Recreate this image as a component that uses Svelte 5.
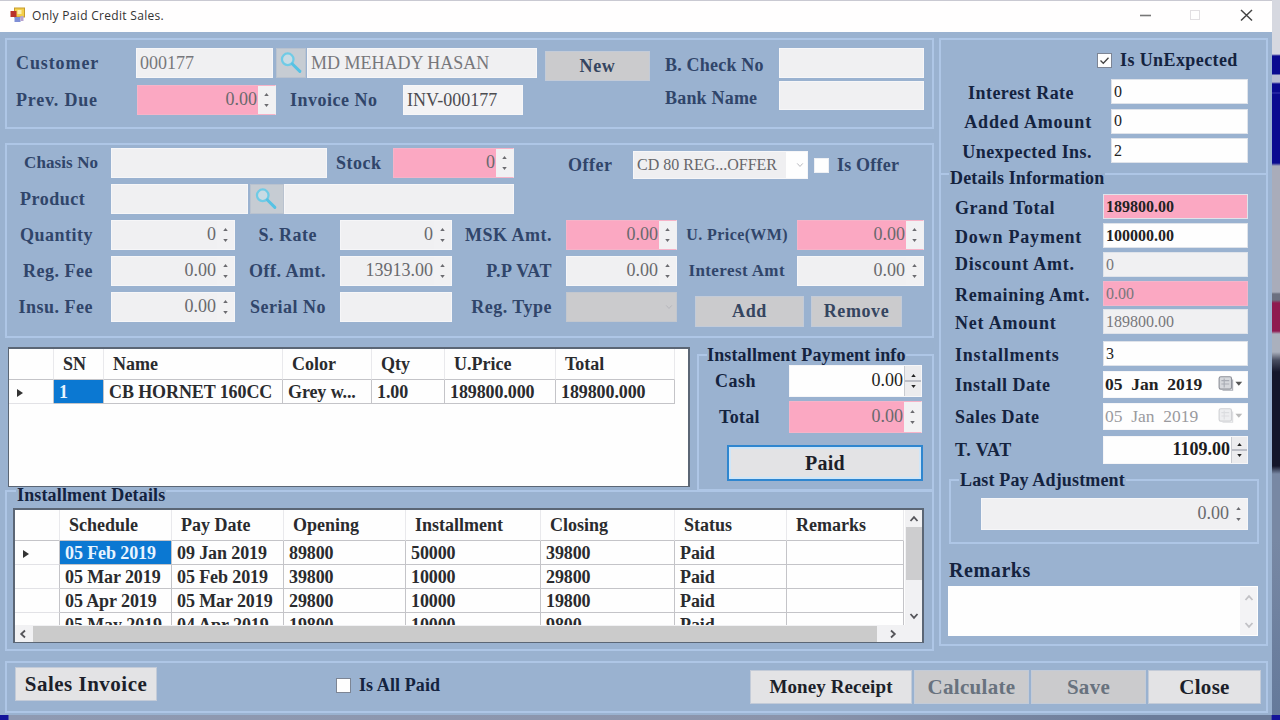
<script>
  let customerId = $state('000177');
  let customerName = $state('MD MEHADY HASAN');
  let invoiceNo = $state('INV-000177');
  let unexpected = $state(true);
  let allPaid = $state(false);
  let isOffer = $state(false);

  const items = [
    { sn: '1', name: 'CB HORNET 160CC', color: 'Grey w...', qty: '1.00', price: '189800.000', total: '189800.000' }
  ];

  const installments = [
    ['05 Feb 2019', '09 Jan 2019', '89800', '50000', '39800', 'Paid', ''],
    ['05 Mar 2019', '05 Feb 2019', '39800', '10000', '29800', 'Paid', ''],
    ['05 Apr 2019', '05 Mar 2019', '29800', '10000', '19800', 'Paid', ''],
    ['05 May 2019', '04 Apr 2019', '19800', '10000', '9800', 'Paid', '']
  ];
</script>

{#snippet num(value, kind = '')}
  <div class="num {kind}">
    <span class="value">{value}</span>
    <span class="spin">
      <svg viewBox="0 0 6 4"><path d="M0 4 3 0 6 4z" /></svg>
      <svg viewBox="0 0 6 4"><path d="M0 0 3 4 6 0z" /></svg>
    </span>
  </div>
{/snippet}

{#snippet lookup()}
  <button class="lookup" aria-label="Search">
    <svg viewBox="0 0 30 30">
      <circle cx="11.500" cy="11" r="6.2" fill="#c9dbe4" stroke="#6fcbe6" stroke-width="2.4" />
      <path d="M16.5 16 24.500 24" stroke="#56c2e4" stroke-width="3.2" stroke-linecap="round" />
    </svg>
  </button>
{/snippet}

{#snippet chevron(dir)}
  <svg class="chevron {dir}" viewBox="0 0 10 10"><path d="M1.5 7 5 3.2 8.5 7" /></svg>
{/snippet}

{#snippet date(value, kind = '')}
  <div class="date {kind}">
    <span>{value}</span>
    <svg viewBox="0 0 24 16">
      <rect x="1" y="1.5" width="11" height="11" rx="1.5" fill="#d6d8dc" stroke="#8d9098" />
      <path d="M3 5h7M3 8h7M5.5 3v8M13 4v9.500H4" fill="none" stroke="#a9acb4" />
      <path d="M15.500 6h6l-3 3.500z" fill="#555" />
    </svg>
  </div>
{/snippet}

<div class="desktop">
  <div class="window">
    <header class="titlebar">
      <svg class="app-icon" viewBox="0 0 16 16">
        <rect x="5" y="1" width="10" height="9" fill="#f3cf4b" stroke="#c79b2a" />
        <rect x="1" y="4" width="6" height="6" fill="#b8322c" />
        <rect x="5" y="10" width="6" height="5" fill="#7f8fd6" />
        <rect x="11" y="9" width="3" height="5" fill="#b7a3cf" />
        <rect x="8" y="3" width="4" height="4" fill="#fbeeb0" />
      </svg>
      <span class="title">Only Paid Credit Sales.</span>
      <svg class="controls" viewBox="0 0 120 16">
        <path d="M4 8.500h11" stroke="#777" stroke-width="1.6" />
        <rect x="54.500" y="3.500" width="9" height="9" fill="none" stroke="#e2dfe2" />
        <path d="M105 3 116 13.500M116 3 105 13.500" stroke="#444" stroke-width="1.500" />
      </svg>
    </header>

    <main>
      <div class="left">
        <section class="panel customer">
          <div>
            <div class="row row-customer">
              <label for="cust">Customer</label>
              <input id="cust" disabled bind:value={customerId} />
              {@render lookup()}
              <input disabled bind:value={customerName} />
              <button class="btn off">New</button>
            </div>
            <div class="row row-invoice">
              <label for="due">Prev. Due</label>
              {@render num('0.00', 'pink')}
              <label for="inv">Invoice No</label>
              <input id="inv" class="mid" bind:value={invoiceNo} />
            </div>
          </div>
          <div class="bank">
            <label for="check">B. Check No</label>
            <input id="check" disabled />
            <label for="bank">Bank Name</label>
            <input id="bank" disabled />
          </div>
        </section>

        <section class="panel product">
          <div class="row row-chasis">
            <label for="chasis">Chasis No</label>
            <input id="chasis" disabled />
            <label for="stock">Stock</label>
            {@render num('0', 'pink')}
            <label for="offer">Offer</label>
            <div class="combo">
              <span>CD 80 REG...OFFER</span>
              {@render chevron('down')}
            </div>
            <label class="check"><input type="checkbox" bind:checked={isOffer} />Is Offer</label>
          </div>
          <div class="row row-product">
            <label for="prod">Product</label>
            <input id="prod" disabled />
            {@render lookup()}
            <input disabled />
          </div>
          <div class="row row-four">
            <span class="label">Quantity</span>
            {@render num('0')}
            <span class="label rate">S. Rate</span>
            {@render num('0')}
            <span class="label">MSK Amt.</span>
            {@render num('0.00', 'pink')}
            <span class="label small">U. Price(WM)</span>
            {@render num('0.00', 'pink')}
          </div>
          <div class="row row-four">
            <span class="label">Reg. Fee</span>
            {@render num('0.00')}
            <span class="label">Off. Amt.</span>
            {@render num('13913.00')}
            <span class="label">P.P VAT</span>
            {@render num('0.00')}
            <span class="label medium">Interest Amt</span>
            {@render num('0.00')}
          </div>
          <div class="row row-four last">
            <span class="label">Insu. Fee</span>
            {@render num('0.00')}
            <span class="label">Serial No</span>
            <input disabled />
            <span class="label">Reg. Type</span>
            <div class="combo gray">{@render chevron('down')}</div>
            <div class="actions">
              <button class="btn off">Add</button>
              <button class="btn off">Remove</button>
            </div>
          </div>
        </section>

        <div class="middle">
          <div class="grid items">
            <table>
              <colgroup>
                <col class="c45" /><col class="c50" /><col class="c179" /><col class="c89" />
                <col class="c73" /><col class="c111" /><col class="c120" />
              </colgroup>
              <thead>
                <tr><th></th><th>SN</th><th>Name</th><th>Color</th><th>Qty</th><th>U.Price</th><th>Total</th></tr>
              </thead>
              <tbody>
                {#each items as item}
                  <tr>
                    <td class="marker"><svg viewBox="0 0 6 8"><path d="M0 0 6 4 0 8z" /></svg></td>
                    <td class="selected">{item.sn}</td>
                    <td>{item.name}</td>
                    <td>{item.color}</td>
                    <td>{item.qty}</td>
                    <td>{item.price}</td>
                    <td>{item.total}</td>
                  </tr>
                {/each}
              </tbody>
            </table>
          </div>

          <fieldset class="payment">
            <legend>Installment Payment info</legend>
            <div class="pay-row">
              <span class="label">Cash</span>
              {@render num('0.00', 'active')}
            </div>
            <div class="pay-row total">
              <span class="label">Total</span>
              {@render num('0.00', 'pink')}
            </div>
            <button class="btn paid">Paid</button>
          </fieldset>
        </div>

        <fieldset class="schedule">
          <legend>Installment Details</legend>
          <div class="grid plan">
            <div class="viewport">
              <table>
                <colgroup>
                  <col class="c45" /><col class="c112" /><col class="c112" /><col class="c122" />
                  <col class="c135" /><col class="c134" /><col class="c112" /><col class="c117" />
                </colgroup>
                <thead>
                  <tr>
                    <th></th><th>Schedule</th><th>Pay Date</th><th>Opening</th>
                    <th>Installment</th><th>Closing</th><th>Status</th><th>Remarks</th>
                  </tr>
                </thead>
                <tbody>
                  {#each installments as line, i}
                    <tr>
                      <td class="marker">
                        {#if i === 0}<svg viewBox="0 0 6 8"><path d="M0 0 6 4 0 8z" /></svg>{/if}
                      </td>
                      {#each line as cell, j}
                        <td class:selected={i === 0 && j === 0}>{cell}</td>
                      {/each}
                    </tr>
                  {/each}
                </tbody>
              </table>
            </div>
            <div class="vscroll">
              {@render chevron('up')}
              <div class="thumb"></div>
              {@render chevron('down')}
            </div>
            <div class="hscroll">
              {@render chevron('left')}
              <div class="thumb"></div>
              {@render chevron('right')}
            </div>
          </div>
        </fieldset>
      </div>

      <aside>
        <section class="panel interest">
          <label class="check"><input type="checkbox" bind:checked={unexpected} />Is UnExpected</label>
          <div class="pairs">
            <label class="rate" for="rate">Interest Rate</label>
            <input id="rate" value="0" />
            <label class="added" for="added">Added Amount</label>
            <input id="added" value="0" />
            <label for="ins">Unexpected Ins.</label>
            <input id="ins" value="2" />
          </div>
        </section>

        <fieldset class="details">
          <legend>Details Information</legend>
          <div class="totals">
            <label for="grand">Grand Total</label>
            <input id="grand" class="pink strong" value="189800.00" />
            <label for="down">Down Payment</label>
            <input id="down" class="strong" value="100000.00" />
            <label for="disc">Discount Amt.</label>
            <input id="disc" disabled value="0" />
            <label for="rem">Remaining Amt.</label>
            <input id="rem" class="pink" disabled value="0.00" />
            <label for="net">Net Amount</label>
            <input id="net" disabled value="189800.00" />
            <label for="count">Installments</label>
            <input id="count" value="3" />
            <span class="label">Install Date</span>
            {@render date('05  Jan  2019')}
            <span class="label">Sales Date</span>
            {@render date('05  Jan  2019', 'dim')}
            <span class="label">T. VAT</span>
            {@render num('1109.00', 'active heavy')}
          </div>

          <fieldset class="adjust">
            <legend>Last Pay Adjustment</legend>
            {@render num('0.00')}
          </fieldset>

          <span class="remarks-title">Remarks</span>
          <div class="memo">
            <div class="memo-scroll">
              {@render chevron('up')}
              {@render chevron('down')}
            </div>
          </div>
        </fieldset>
      </aside>
    </main>

    <footer class="panel bottom">
      <button class="btn invoice">Sales Invoice</button>
      <label class="check"><input type="checkbox" bind:checked={allPaid} />Is All Paid</label>
      <div class="commands">
        <button class="btn receipt">Money Receipt</button>
        <button class="btn dim">Calculate</button>
        <button class="btn dim">Save</button>
        <button class="btn">Close</button>
      </div>
    </footer>
  </div>
</div>

<style>
  :global(body) {
    margin: 0;
    overflow: hidden;
  }

  .desktop,
  .desktop :global(*) {
    box-sizing: border-box;
  }

  .desktop {
    width: 1280px;
    height: 720px;
    padding: 0 8px 5px 0;
    overflow: hidden;
    background:
      linear-gradient(90deg, #14149a 8px, #8f9ab2 9px, #8b94ab 62%, #6b7c9a 90%, #6b7c9a 99.300%, #14149a 99.400%) 0 100% / 100% 5px no-repeat,
      linear-gradient(
        180deg,
        #d6d8e0 0 54px, #0a0a90 56px 74px, #b9bdd2 75px 82px, #0a0a90 84px 92px, #3a3ab0 93px,
        #0a0a90 94px 163px, #a9acba 166px 292px, #6c7080 294px 300px, #8f1a50 303px 331px,
        #aab0bd 334px 352px, #4a4f62 360px, #14162a 372px 466px, #7888a4 474px 540px, #64799a 100%
      );
    font-family: 'Liberation Serif', serif;
    font-size: 18px;
    color: #14233f;
  }

  .window {
    width: 1272px;
    height: 715px;
    background: #9ab2d0;
    border-top: 1px solid #c9c9d2;
  }

  .titlebar {
    height: 31px;
    display: flex;
    align-items: center;
    padding: 0 16px 3px 9px;
    background: #fffefe;
  }

  .app-icon {
    width: 17px;
    height: 16px;
  }

  .title {
    flex: 1;
    margin-left: 6px;
    font: 12px 'Open Sans', sans-serif;
    letter-spacing: 0.3px;
    color: #333;
  }

  .controls {
    width: 120px;
    height: 16px;
  }

  main {
    display: flex;
    gap: 5px;
    height: 629px;
    padding: 6px 4px 0 5px;
  }

  .left {
    width: 929px;
  }

  aside {
    width: 329px;
  }

  .panel,
  fieldset {
    margin: 0;
    padding: 0;
    min-width: 0;
    border: 2px solid #aec6e6;
  }

  legend {
    height: 20px;
    line-height: 20px;
    padding: 0 1px;
    font-weight: bold;
    letter-spacing: 0.15px;
    white-space: nowrap;
  }

  label,
  .label {
    font-weight: bold;
    letter-spacing: 0.5px;
    white-space: nowrap;
  }

  input:not([type]),
  .num,
  .date,
  .combo {
    min-width: 0;
    width: 100%;
    height: 30px;
    padding: 0 3px;
    border: 1px solid #f6f6f8;
    border-radius: 0;
    background: #fefefe;
    color: #222;
    font: 18px 'Liberation Serif', serif;
    outline: none;
  }

  input:not([type]):disabled {
    background: #f0f0f2;
    color: #77777b;
  }

  input.mid {
    background: #f3f3f5;
    color: #4c4c50;
  }

  input.pink:not([type]),
  input.pink:not([type]):disabled {
    background: #fba8c2;
    border-color: #f4b5ca;
  }

  input.strong:not([type]) {
    font-weight: bold;
  }

  /* Numeric up-down */
  .num {
    display: flex;
    padding: 0;
    background: #f0f0f2;
    color: #69696d;
  }

  .num .value {
    flex: 1;
    display: flex;
    align-items: center;
    justify-content: flex-end;
    padding: 0 1px 1px 0;
  }

  .num.pink .value {
    background: #fba8c2;
  }

  .num.pink {
    border-color: #f6b3c8;
    border-right-color: #f0f0f2;
  }

  .num.active {
    background: #fefefe;
    color: #1d1d20;
  }

  .num.heavy {
    font-weight: bold;
  }

  .spin {
    width: 17px;
    display: flex;
    flex-direction: column;
    align-items: center;
    justify-content: center;
    gap: 8px;
    background: #f1f1f3;
  }

  .spin svg {
    width: 5px;
    height: 3px;
    fill: #6b6b70;
  }

  .active .spin {
    border-left: 1px solid #c9cbd0;
    background: linear-gradient(#ececee 0 48%, #bcbec6 48% 53%, #ececee 53%);
  }

  .active .spin svg {
    fill: #222;
  }

  .btn {
    padding: 0;
    border: 1px solid #c3cbd8;
    background: #e3e3e5;
    color: #1c1f2a;
    font: bold 21px 'Liberation Serif', serif;
    letter-spacing: 0.3px;
    white-space: nowrap;
  }

  .btn.off {
    background: #cbcbcd;
    color: #354560;
    font-size: 18px;
    letter-spacing: 0.6px;
  }

  .btn.dim {
    background: #cbcbcd;
    color: #68727e;
  }

  .lookup {
    width: 30px;
    height: 30px;
    padding: 0;
    border: 1px solid #b9c2cf;
    background: #c6ccd3;
  }

  .lookup svg {
    display: block;
    width: 28px;
    height: 28px;
  }

  .check {
    display: flex;
    align-items: center;
    gap: 8px;
  }

  input[type='checkbox'] {
    appearance: none;
    width: 15px;
    height: 15px;
    margin: 0;
    border: 1px solid #7d8594;
    background: #fefefe;
  }

  input[type='checkbox']:checked {
    background: #fefefe url("data:image/svg+xml,%3Csvg xmlns='http://www.w3.org/2000/svg' viewBox='0 0 13 13'%3E%3Cpath d='M2.500 6.500 5.300 9.300 10.500 3.800' fill='none' stroke='%23444' stroke-width='1.300'/%3E%3C/svg%3E");
  }

  .chevron {
    width: 10px;
    height: 10px;
    fill: none;
    stroke: #55555a;
    stroke-width: 1.8;
  }

  .chevron.down {
    transform: rotate(180deg);
  }

  .chevron.left {
    transform: rotate(-90deg);
  }

  .chevron.right {
    transform: rotate(90deg);
  }

  .combo {
    display: flex;
    align-items: center;
    justify-content: space-between;
    height: 28px;
    font-size: 16px;
    color: #66666a;
    background: linear-gradient(90deg, #efeff1 152px, #fefefe 152px);
  }

  .combo.gray {
    height: 30px;
    justify-content: flex-end;
    background: #cbcbcd;
    border-color: #c3c7ce;
  }

  .combo .chevron {
    width: 8px;
    stroke: #b5b5ba;
    stroke-width: 1.2;
  }

  .row {
    display: grid;
    grid-template-rows: 30px;
    align-items: center;
    height: 30px;
  }

  .row label,
  .row .label,
  .bank label {
    color: #30456a;
  }

  /* Customer */
  .customer {
    display: flex;
    height: 91px;
    margin-bottom: 14px;
    padding-top: 8px;
  }

  .customer label {
    padding-left: 14px;
  }

  .row-customer {
    grid-template-columns: 129px 137px 34px 230px 113px;
    margin-bottom: 7px;
  }

  .row-customer label {
    padding-left: 9px;
    letter-spacing: 0.9px;
  }

  .row-customer .lookup {
    margin-left: 3px;
  }

  .row-customer .btn {
    align-self: start;
    height: 30px;
    margin: 3px 0 0 8px;
  }

  .row-invoice {
    grid-template-columns: 130px 139px 127px 120px;
  }

  .row-invoice label:first-child {
    padding-left: 9px;
    letter-spacing: 0.8px;
  }

  .bank {
    display: grid;
    grid-template-columns: 129px 145px;
    grid-template-rows: 30px 29px;
    row-gap: 3px;
    align-items: center;
    height: 62px;
  }

  .bank label {
    padding: 5px 0 0 15px;
    letter-spacing: 0.2px;
  }

  .bank input:not([type]) {
    height: 100%;
  }

  /* Product */
  .product {
    height: 195px;
    padding-top: 3px;
  }

  .row-chasis {
    grid-template-columns: 104px 216px 66px 121px 119px 175px 110px;
  }

  .row-chasis label {
    padding-left: 9px;
  }

  .row-chasis label:first-child {
    padding-left: 17px;
    font-size: 17px;
    letter-spacing: 0.1px;
  }

  .row-chasis label[for='offer'] {
    padding: 4px 0 0 54px;
  }

  .row-chasis .combo {
    margin-top: 4px;
  }

  .row-chasis .check {
    padding: 5px 0 0 6px;
    letter-spacing: 0.2px;
  }

  .row-chasis input[type='checkbox'] {
    border-color: #eef0f4;
  }

  .row-product {
    grid-template-columns: 104px 137px 36px 230px;
    margin-top: 6px;
  }

  .row-product label {
    padding-left: 13px;
  }

  .row-product .lookup {
    width: 34px;
    margin-left: 2px;
  }

  .row-product .lookup svg {
    width: 30px;
  }

  .row-four {
    grid-template-columns: 104px 124px 105px 112px 114px 111px 120px 127px;
    margin-top: 6px;
  }

  .row-four .label {
    padding-right: 14px;
    text-align: right;
  }

  .row-four .label:first-child {
    padding-right: 18px;
    letter-spacing: 0.5px;
  }

  .row-four .label.rate {
    padding-right: 23px;
  }

  .row-four .label.small {
    font-size: 16px;
    padding-right: 9px;
    letter-spacing: 0.4px;
  }

  .row-four .label.medium {
    font-size: 17px;
    padding-right: 12px;
    letter-spacing: 0.4px;
  }

  .actions {
    grid-column: span 2;
    align-self: start;
    display: flex;
    gap: 7px;
    padding: 4px 0 0 18px;
  }

  .actions .btn {
    width: 109px;
    height: 31px;
  }

  .actions .btn + .btn {
    width: 91px;
  }

  /* Grids */
  .grid {
    border: 1px solid #5b6675;
    background: #fefefe;
    overflow: hidden;
  }

  table {
    table-layout: fixed;
    border-collapse: separate;
    border-spacing: 0;
    width: 0;
    color: #2a2b2e;
    font-size: 18px;
    font-weight: bold;
  }

  th,
  td {
    padding: 0;
    height: 24px;
    border-right: 1px solid #c4c4c8;
    border-bottom: 1px solid #c4c4c8;
    line-height: 22px;
    text-align: left;
    white-space: nowrap;
  }

  td {
    padding-left: 5px;
    letter-spacing: -0.1px;
  }

  th {
    height: 31px;
    padding-left: 9px;
    border-right-color: #e9e9ec;
  }

  td.marker {
    padding-left: 8px;
    border-bottom-color: #e2e2e6;
    line-height: 8px;
  }

  .marker svg {
    width: 6px;
    height: 8px;
    fill: #333;
  }

  .selected {
    background: #0b78d2;
    color: #e8f4ff;
  }

  .c45 { width: 45px; }
  .c50 { width: 50px; }
  .c73 { width: 73px; }
  .c89 { width: 89px; }
  .c111 { width: 111px; }
  .c112 { width: 112px; }
  .c117 { width: 117px; }
  .c120 { width: 119px; }
  .c122 { width: 122px; }
  .c134 { width: 134px; }
  .c135 { width: 135px; }
  .c179 { width: 179px; }

  .middle {
    display: flex;
    justify-content: space-between;
    height: 146px;
    margin-top: 7px;
    padding-left: 3px;
  }

  .items {
    width: 682px;
    height: 140px;
    margin-top: 2px;
    border-width: 2px 2px 1px 1px;
  }

  .payment {
    width: 237px;
    padding: 0 0 0 8px;
  }

  .payment legend {
    padding: 0;
    letter-spacing: 0.15px;
  }

  .pay-row {
    display: grid;
    grid-template-columns: 82px 133px;
    align-items: center;
    height: 32px;
    margin-bottom: 4px;
  }

  .pay-row .label {
    padding-left: 8px;
  }

  .pay-row.total .label {
    padding-left: 12px;
    letter-spacing: 0.3px;
  }

  .pay-row .num {
    height: 32px;
  }

  .payment .paid {
    width: 196px;
    height: 36px;
    margin: 8px 0 0 20px;
    border: 2px solid #2f86cf;
    box-shadow: inset 0 0 0 2px #cfe6f8;
    font-size: 20px;
  }

  .schedule {
    height: 174px;
    margin-top: -14px;
    padding-left: 6px;
  }

  .schedule legend,
  .details > legend {
    height: 28px;
    padding-top: 8px;
  }

  .schedule legend {
    margin-left: 3px;
  }

  .plan {
    display: grid;
    grid-template-columns: 890px 18px;
    grid-template-rows: 115px 17px;
    width: 911px;
    height: 135px;
    margin-top: 3px;
    border-width: 2px 2px 1px;
  }

  .viewport {
    overflow: hidden;
  }

  .vscroll {
    display: flex;
    flex-direction: column;
    align-items: center;
    padding: 4px 0 4px;
    background: #f1f1f3;
  }

  .vscroll .thumb {
    width: 16px;
    height: 53px;
    margin: 3px 0 auto;
    background: #cdcdcf;
  }

  .hscroll {
    grid-column: span 2;
    display: flex;
    align-items: center;
    padding: 0 25px 0 3px;
    background: #f1f1f3;
  }

  .hscroll .thumb {
    width: 844px;
    height: 16px;
    margin: 0 auto 0 5px;
    background: #cbcbcb;
  }

  /* Right column */
  .interest {
    height: 136px;
    padding-top: 10px;
    border-bottom: 0;
  }

  .interest .check {
    height: 20px;
    margin-left: 156px;
    letter-spacing: 0.4px;
  }

  .pairs {
    display: grid;
    grid-template-columns: 170px 137px;
    grid-auto-rows: 25px;
    row-gap: 4.500px;
    align-items: center;
    margin-top: 9px;
  }

  .pairs label {
    padding: 4px 19px 0 0;
    text-align: right;
    letter-spacing: 0.45px;
  }

  .pairs label.rate {
    padding-right: 37px;
  }

  .pairs label.added {
    padding-top: 2px;
    letter-spacing: 0.85px;
  }

  .pairs input:not([type]),
  .totals input:not([type]) {
    height: 25px;
    padding: 0 2px;
    font-size: 16px;
    border-color: #dfe3ea;
  }

  .details {
    height: 486px;
    margin-top: -14px;
  }

  .details > legend {
    margin-left: 8px;
  }

  .totals {
    display: grid;
    grid-template-columns: 162px 145px;
    grid-template-rows: 29px 29px 29px 28px 32px 30px 32px 33px 28px;
    margin-top: 6px;
  }

  .totals label,
  .totals .label {
    padding-left: 14px;
    line-height: 28px;
  }

  .totals label[for='down'] {
    letter-spacing: 0.8px;
  }

  .totals label[for='disc'] {
    line-height: 25px;
    letter-spacing: 0.75px;
  }

  .totals label[for='rem'] {
    letter-spacing: 0.65px;
  }

  .totals label[for='net'],
  .totals label[for='count'] {
    letter-spacing: 0.8px;
  }

  .date {
    display: flex;
    align-items: center;
    justify-content: space-between;
    height: 27px;
    padding: 0 2px 1px 1px;
    font-weight: bold;
    font-size: 17.500px;
    white-space: pre;
  }

  .date svg {
    width: 27px;
    height: 18px;
  }

  .date.dim {
    color: #9a9a9e;
    font-weight: normal;
  }

  .date.dim svg {
    opacity: 0.4;
  }

  .totals .num {
    height: 28px;
  }

  .totals .spin {
    width: 16px;
  }

  .adjust {
    width: 310px;
    height: 74px;
    margin: 6px 0 0 8px;
  }

  .adjust legend {
    margin-left: 8px;
  }

  .adjust .num {
    width: 267px;
    height: 32px;
    margin: 8px 0 0 30px;
  }

  .remarks-title {
    display: block;
    margin: 14px 0 0 8px;
    font-size: 20px;
    font-weight: bold;
    line-height: 24px;
    letter-spacing: 0.6px;
  }

  .memo {
    display: flex;
    justify-content: flex-end;
    width: 310px;
    height: 50px;
    margin: 4px 0 0 7px;
    background: #fefefe;
  }

  .memo-scroll {
    display: flex;
    flex-direction: column;
    align-items: center;
    justify-content: space-between;
    width: 17px;
    padding: 6px 0 5px;
    margin: 1px;
    background: #f3f3f5;
  }

  .memo .chevron {
    stroke: #c2c2c6;
  }

  /* Bottom bar */
  .panel.bottom {
    display: flex;
    height: 52px;
    margin: 0 4px 0 5px;
  }

  .invoice {
    width: 142px;
    height: 34px;
    margin: 4px 0 0 8px;
    letter-spacing: 0.5px;
  }

  .bottom .check {
    height: 20px;
    margin: 12px 0 0 179px;
    letter-spacing: 0.1px;
  }

  .commands {
    display: grid;
    grid-template-columns: 162px 115px 115px 113px;
    gap: 2px;
    height: 34px;
    margin: 7px 5px 0 auto;
  }

  .commands .receipt {
    font-size: 19px;
    letter-spacing: 0.1px;
  }
</style>
